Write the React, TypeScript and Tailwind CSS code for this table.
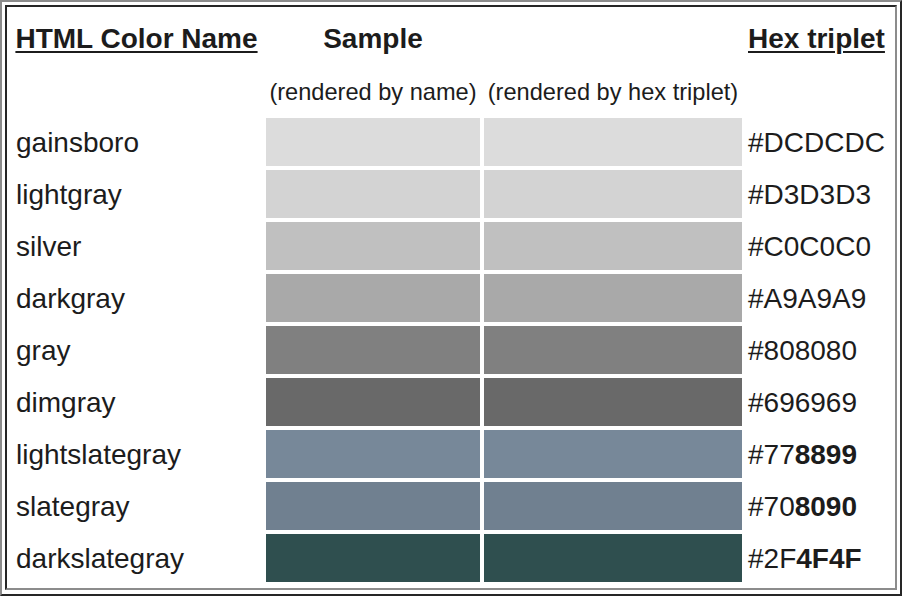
import React from "react";

type Row = { name: string; color: string; hexA: string; hexB: string };

const rows: Row[] = [
  { name: "gainsboro", color: "#DCDCDC", hexA: "#DCDCDC", hexB: "" },
  { name: "lightgray", color: "#D3D3D3", hexA: "#D3D3D3", hexB: "" },
  { name: "silver", color: "#C0C0C0", hexA: "#C0C0C0", hexB: "" },
  { name: "darkgray", color: "#A9A9A9", hexA: "#A9A9A9", hexB: "" },
  { name: "gray", color: "#808080", hexA: "#808080", hexB: "" },
  { name: "dimgray", color: "#696969", hexA: "#696969", hexB: "" },
  { name: "lightslategray", color: "#778899", hexA: "#77", hexB: "8899" },
  { name: "slategray", color: "#708090", hexA: "#70", hexB: "8090" },
  { name: "darkslategray", color: "#2F4F4F", hexA: "#2F", hexB: "4F4F" },
];

export default function App() {
  return (
    <div
      className="w-[902px] h-[596px] bg-white text-[#1c1c1c] border-2 border-t-[#8c8c8c] border-l-[#8c8c8c] border-r-[#262626] border-b-[#262626] pt-[3px] pl-[3px] pr-[3px] pb-[4px]"
      style={{ fontFamily: '"Liberation Sans", Arial, Helvetica, sans-serif' }}
    >
      <div className="h-full border-2 border-t-[#262626] border-l-[#262626] border-r-[#8c8c8c] border-b-[#8c8c8c] pt-[4px] px-[4px] pb-[6px]">
        <div className="grid grid-cols-[251px_214px_258px_145px] grid-rows-[55px_44px_repeat(9,48px)] gap-[4px]">
          <div className="flex items-center justify-center pt-[1px] text-[28px] font-bold leading-none">
            <span className="underline decoration-2 underline-offset-[3px]">HTML Color Name</span>
          </div>
          <div className="flex items-center justify-center pt-[1px] text-[28px] font-bold leading-none">
            Sample
          </div>
          <div />
          <div className="flex items-center justify-start pl-[2px] pt-[1px] text-[28px] font-bold leading-none whitespace-nowrap">
            <span className="underline decoration-2 underline-offset-[3px]">Hex triplet</span>
          </div>

          <div />
          <div className="flex items-center justify-center pt-[2px] text-[23.6px] leading-none whitespace-nowrap">
            (rendered by name)
          </div>
          <div className="flex items-center justify-center pt-[2px] text-[23.6px] leading-none whitespace-nowrap">
            (rendered by hex triplet)
          </div>
          <div />

          {rows.map((r) => (
            <React.Fragment key={r.name}>
              <div className="flex items-center pl-[5px] pt-[2px] text-[28px] leading-none whitespace-nowrap">
                {r.name}
              </div>
              <div style={{ backgroundColor: r.color }} />
              <div style={{ backgroundColor: r.color }} />
              <div className="flex items-center pl-[2px] pt-[2px] text-[28px] leading-none whitespace-nowrap">
                <span>{r.hexA}</span>
                {r.hexB && <span className="font-bold">{r.hexB}</span>}
              </div>
            </React.Fragment>
          ))}
        </div>
      </div>
    </div>
  );
}
